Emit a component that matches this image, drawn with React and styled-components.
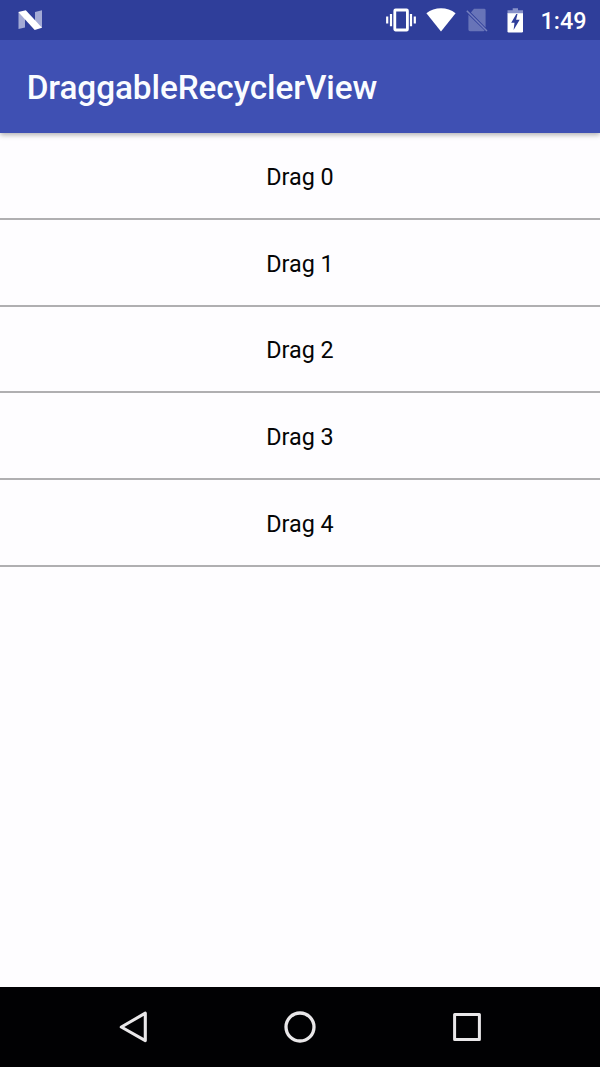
import React from 'react';
import styled, { createGlobalStyle } from 'styled-components';

const GlobalStyle = createGlobalStyle`
  * { box-sizing: border-box; }
  body { margin: 0; font-family: Roboto, "Liberation Sans", sans-serif; }
`;

const Screen = styled.div`
  width: 600px;
  height: 1067px;
  display: flex;
  flex-direction: column;
  overflow: hidden;
  background: #fefdff;
`;

const StatusBar = styled.header`
  height: 40px;
  flex: none;
  display: flex;
  align-items: center;
  padding: 0 13.5px 0 18px;
  background: #2f3e9a;
  z-index: 2;
`;

const StatusIcons = styled.div`
  display: flex;
  align-items: center;
  gap: 10px;
  margin-left: auto;
`;

const Icon = styled.svg`
  display: block;
  flex: none;
  width: ${(p) => p.$w}px;
  height: ${(p) => p.$h}px;
`;

const Clock = styled.time`
  margin-left: 7px;
  padding-top: 2px;
  font-size: 23.33px;
  line-height: 28px;
  font-weight: 500;
  color: #fff;
`;

const AppBar = styled.div`
  height: 93.33px;
  flex: none;
  display: flex;
  align-items: center;
  padding: 3.5px 26.67px 0;
  background: #3f50b3;
  box-shadow: 0 2px 5px rgba(0, 0, 0, 0.3);
  z-index: 1;
`;

const Title = styled.h1`
  margin: 0;
  font-size: 33.33px;
  line-height: 40px;
  font-weight: 500;
  letter-spacing: -0.08px;
  color: #fafcff;
`;

const List = styled.ul`
  flex: 1;
  margin: 0;
  padding: 0;
  list-style: none;
`;

const Row = styled.li`
  height: 86.67px;
  display: flex;
  align-items: center;
  justify-content: center;
  padding-top: 3px;
  border-bottom: 2px solid #b0afb1;
  font-size: 23.33px;
  line-height: 28px;
  color: #050505;
`;

const NavBar = styled.nav`
  height: 80px;
  flex: none;
  display: flex;
  align-items: center;
  justify-content: center;
  background: #010103;
`;

const NavButton = styled.button`
  width: 166.67px;
  height: 80px;
  display: flex;
  align-items: center;
  justify-content: center;
  padding: 0;
  border: 0;
  background: none;
`;

const NougatIcon = () => (
  <Icon $w={24} $h={20} viewBox="0 0 24 20">
    <path d="M.5 2L7 7V17.5L.5 19zM24 .3V18L17 13V2z" fill="#a3aad5" />
    <path d="M.3 2L7.8.3 24 17.8 16.700 20z" fill="#fff" />
  </Icon>
);

const VibrateIcon = () => (
  <Icon $w={30} $h={24} viewBox="0 0 30 24" fill="none" stroke="#fff">
    <rect x="8.8" y="2" width="12.6" height="20" rx=".8" strokeWidth="2.8" />
    <path d="M1.2 8.4v7M28.8 8.4v7M5 6v12.3M25 6v12.3" strokeWidth="2.2" />
  </Icon>
);

const WifiIcon = () => (
  <Icon $w={30} $h={24} viewBox="0 0 30 24">
    <path d="M15 23.5L.4 5.3C8.6-1.4 21.4-1.4 29.6 5.3z" fill="#fff" />
  </Icon>
);

const NoSimIcon = () => (
  <Icon $w={22} $h={24} viewBox="0 0 22 24">
    <path d="M8 .8h10.2q1.4 0 1.4 1.4v17.300L4.9 4.4zM2.4 6.700L18.6 22.6q-.2.6-1.2.6H4q-1.6 0-1.6-1.6z" fill="#6874b8" />
    <path d="M.8 2.8L21 23" stroke="#7680bf" strokeWidth="1.5" />
  </Icon>
);

const BatteryIcon = () => (
  <Icon $w={26} $h={25} viewBox="-1.5 0 26 25">
    <path d="M13.2.3h5.3v2H23.5V6H8V2.3h5.2z" fill="#8993ca" />
    <path d="M8 5.3h15.5v18q0 1.2-1.2 1.2H9.2Q8 24.5 8 23.3z" fill="#fff" />
    <path d="M16.8 5.9L11.7 14.8h3.3l-.9 7.3 6.1-10.4h-3.6l1.4-5.8z" fill="#2f3e9a" />
  </Icon>
);

const BackIcon = () => (
  <Icon $w={30} $h={32} viewBox="0 0 30 32">
    <path d="M27.3 2.2V29.6L3.3 16z" fill="none" stroke="#e9e7e9" strokeWidth="3.1" strokeLinejoin="round" />
  </Icon>
);

const HomeIcon = () => (
  <Icon $w={32} $h={32} viewBox="0 0 32 32">
    <circle cx="16" cy="16" r="14" fill="none" stroke="#e9e7e9" strokeWidth="3.3" />
  </Icon>
);

const RecentsIcon = () => (
  <Icon $w={28} $h={28} viewBox="0 0 28 28">
    <rect x="1.6" y="1.6" width="24.8" height="24.8" fill="none" stroke="#e9e7e9" strokeWidth="3" strokeLinejoin="round" />
  </Icon>
);

const items = ['Drag 0', 'Drag 1', 'Drag 2', 'Drag 3', 'Drag 4'];

export default function App() {
  return (
    <Screen>
      <GlobalStyle />
      <StatusBar>
        <NougatIcon />
        <StatusIcons>
          <VibrateIcon />
          <WifiIcon />
          <NoSimIcon />
          <BatteryIcon />
          <Clock>1:49</Clock>
        </StatusIcons>
      </StatusBar>
      <AppBar>
        <Title>DraggableRecyclerView</Title>
      </AppBar>
      <List>
        {items.map((label) => (
          <Row key={label}>{label}</Row>
        ))}
      </List>
      <NavBar>
        <NavButton aria-label="Back"><BackIcon /></NavButton>
        <NavButton aria-label="Home"><HomeIcon /></NavButton>
        <NavButton aria-label="Recents"><RecentsIcon /></NavButton>
      </NavBar>
    </Screen>
  );
}
